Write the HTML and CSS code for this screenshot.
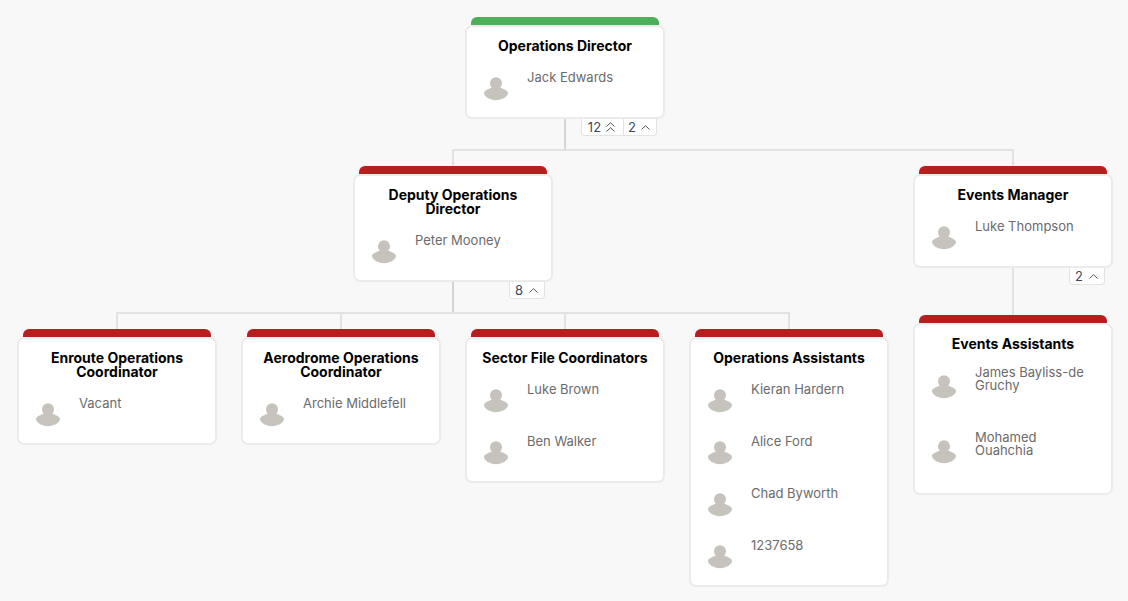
FILE: index.html
```html
<!DOCTYPE html>
<html lang="en">
<head>
<meta charset="utf-8">
<title>Organisation chart</title>
<link rel="stylesheet" href="styles.css">
</head>
<body>
<svg class="defs" width="0" height="0" aria-hidden="true">
  <symbol id="person" viewBox="0 0 26 26">
    <circle cx="13" cy="7.300" r="6"/>
    <path d="M9 11.500C6 12.800 1 14.500 1 17C1 20.500 7 24.200 13 24.200C19 24.200 25 20.500 25 17C25 14.500 20 12.800 17 11.500Z"/>
  </symbol>
  <symbol id="chev" viewBox="0 0 9 5"><path d="M0.500 4.500L4.500 0.700L8.500 4.500"/></symbol>
  <symbol id="chev2" viewBox="0 0 9 10"><path d="M0.500 4.500L4.500 0.700L8.500 4.500M0.500 9.500L4.500 5.700L8.500 9.500"/></symbol>
</svg>
<div class="tree">
  <div class="branch root">
    <div class="node green parent">
      <h3 class="title">Operations Director</h3>
      <div class="person"><svg class="avatar"><use href="#person"/></svg><span class="name">Jack Edwards</span></div>
      <div class="toggles">
        <span class="toggle">12<svg class="chevron double"><use href="#chev2"/></svg></span>
        <span class="toggle">2<svg class="chevron"><use href="#chev"/></svg></span>
      </div>
    </div>
    <div class="children">
      <div class="branch group">
        <div class="node parent">
          <h3 class="title">Deputy Operations Director</h3>
          <div class="person"><svg class="avatar"><use href="#person"/></svg><span class="name">Peter Mooney</span></div>
          <div class="toggles"><span class="toggle">8<svg class="chevron"><use href="#chev"/></svg></span></div>
        </div>
        <div class="children">
          <div class="branch">
            <div class="node">
              <h3 class="title">Enroute Operations Coordinator</h3>
              <div class="person"><svg class="avatar"><use href="#person"/></svg><span class="name">Vacant</span></div>
            </div>
          </div>
          <div class="branch">
            <div class="node">
              <h3 class="title">Aerodrome Operations Coordinator</h3>
              <div class="person"><svg class="avatar"><use href="#person"/></svg><span class="name">Archie Middlefell</span></div>
            </div>
          </div>
          <div class="branch">
            <div class="node">
              <h3 class="title">Sector File Coordinators</h3>
              <div class="person"><svg class="avatar"><use href="#person"/></svg><span class="name">Luke Brown</span></div>
              <div class="person"><svg class="avatar"><use href="#person"/></svg><span class="name">Ben Walker</span></div>
            </div>
          </div>
          <div class="branch">
            <div class="node">
              <h3 class="title">Operations Assistants</h3>
              <div class="person"><svg class="avatar"><use href="#person"/></svg><span class="name">Kieran Hardern</span></div>
              <div class="person"><svg class="avatar"><use href="#person"/></svg><span class="name">Alice Ford</span></div>
              <div class="person"><svg class="avatar"><use href="#person"/></svg><span class="name">Chad Byworth</span></div>
              <div class="person"><svg class="avatar"><use href="#person"/></svg><span class="name">1237658</span></div>
            </div>
          </div>
        </div>
      </div>
      <div class="branch group">
        <div class="node parent">
          <h3 class="title">Events Manager</h3>
          <div class="person"><svg class="avatar"><use href="#person"/></svg><span class="name">Luke Thompson</span></div>
          <div class="toggles"><span class="toggle">2<svg class="chevron"><use href="#chev"/></svg></span></div>
        </div>
        <div class="children only">
          <div class="branch">
            <div class="node">
              <h3 class="title">Events Assistants</h3>
              <div class="person"><svg class="avatar"><use href="#person"/></svg><span class="name two-line">James Bayliss-de Gruchy</span></div>
              <div class="person"><svg class="avatar"><use href="#person"/></svg><span class="name two-line">Mohamed Ouahchia</span></div>
            </div>
          </div>
        </div>
      </div>
    </div>
  </div>
</div>
</body>
</html>
```
FILE: styles.css
```css
* { box-sizing: border-box; }

html, body {
  margin: 0;
  height: 100%;
  background: #f8f8f8;
  overflow: hidden;
}

body {
  font-family: Inter, "Liberation Sans", sans-serif;
}

.defs { position: absolute; }

.tree {
  display: flex;
  padding: 25px 0 0 5px;
}

.branch {
  position: relative;
  display: flex;
  flex-direction: column;
  align-items: center;
  padding: 0 12px;
}

.root,
.group { padding: 0; }

.children {
  position: relative;
  display: flex;
  align-items: flex-start;
  padding-top: 55px;
}

/* vertical from parent card down to the rail */
.children::before {
  content: "";
  position: absolute;
  top: 0;
  left: 50%;
  width: 2px;
  height: 32px;
  margin-left: -1px;
  background: #d4d4d4;
}

/* rail and drop on each child */
.children > .branch::before {
  content: "";
  position: absolute;
  top: -25px;
  left: 0;
  right: 0;
  height: 2px;
  background: #e2e2e2;
}

.children > .branch::after {
  content: "";
  position: absolute;
  top: -25px;
  left: 50%;
  width: 2px;
  height: 20px;
  margin-left: -1px;
  background: #e2e2e2;
}

.children > .branch:first-child::before { left: 50%; margin-left: -1px; }
.children > .branch:last-child::before { right: 50%; margin-right: -1px; }
.children > .branch:only-child::before { display: none; }
.children.only::before { height: 56px; background: #e2e2e2; }

.node {
  position: relative;
  width: 200px;
  padding: 12px 0 0;
  background: #fff;
  border: 2px solid #ebebeb;
  border-radius: 7px;
  z-index: 1;
}

.node::before {
  content: "";
  position: absolute;
  top: -10px;
  left: 4px;
  right: 4px;
  height: 8px;
  background: #b71f1f;
  border-radius: 6px 6px 0 0;
}

.green::before { background: #4caf5a; }

.title {
  margin: 0 0 12px;
  padding: 0 14px;
  font-size: 14px;
  font-weight: 700;
  line-height: 14px;
  text-align: center;
  color: #000;
}

.person {
  display: flex;
  align-items: flex-start;
  padding-left: 16px;
}

.parent .person:last-of-type { margin-bottom: -5px; }

.avatar {
  flex: none;
  width: 26px;
  height: 26px;
  margin-top: 11px;
  fill: #c6c3bc;
}

.name {
  margin: 6px 16px 33px 18px;
  font-size: 13px;
  line-height: 13px;
  color: #6b6b6b;
}

.name.two-line { margin-top: 3px; margin-bottom: 36px; }

.toggles {
  position: absolute;
  top: calc(100% + 2px);
  right: 6px;
  display: flex;
  height: 17px;
  background: #fff;
  border: 1px solid #e3e3e3;
  border-top: 0;
  border-radius: 0 0 4px 4px;
}

.toggle {
  display: flex;
  align-items: center;
  gap: 6px;
  padding: 0 6px 0 5px;
  font-size: 13px;
  color: #3c4a5c;
}

.toggle:not(:last-child) { gap: 5px; padding: 0 8px 0 6px; }

.toggle + .toggle { gap: 5px; border-left: 1px solid #e3e3e3; padding: 0 6px 0 4px; }

.chevron {
  width: 9px;
  height: 5px;
  fill: none;
  stroke: #555;
  stroke-width: 1;
}

.chevron.double { height: 10px; }
```
